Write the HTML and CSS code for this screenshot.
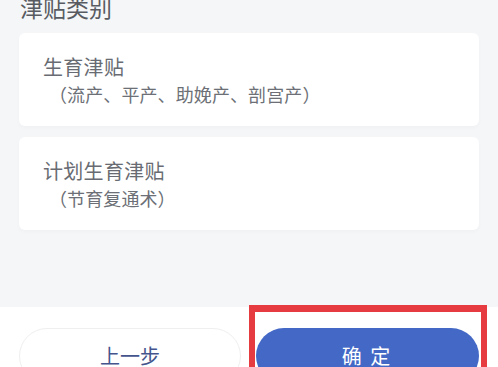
FILE: index.html
```html
<!DOCTYPE html>
<html lang="zh-CN">
<head>
<meta charset="utf-8">
<title>津贴类别</title>
<link rel="stylesheet" href="styles.css">
</head>
<body>
<div class="page">
  <main class="content">
    <h2 class="title">津贴类别</h2>
    <div class="card">
      <div class="card-name">生育津贴</div>
      <div class="card-desc">（流产、平产、助娩产、剖宫产）</div>
    </div>
    <div class="card">
      <div class="card-name">计划生育津贴</div>
      <div class="card-desc">（节育复通术）</div>
    </div>
  </main>
  <footer class="footer">
    <button class="btn btn-prev">上一步</button>
    <button class="btn btn-ok">确 定</button>
    <div class="highlight"></div>
  </footer>
</div>
</body>
</html>
```

FILE: styles.css
```css
* { box-sizing: border-box; }
html, body {
  margin: 0;
  padding: 0;
  background: #f5f6f8;
  font-family: "Noto Sans CJK SC", "Noto Sans", sans-serif;
}
.page {
  height: 367px;
  overflow: hidden;
  display: flex;
  flex-direction: column;
}
.content {
  flex: 1;
  padding: 0 19px;
}
.title {
  margin: -8px 0 0 1px;
  font-size: 23px;
  line-height: 30px;
  font-weight: 400;
  color: #585c62;
}
.card {
  margin-top: 11px;
  background: #ffffff;
  border-radius: 6px;
  padding: 20px 24px 19px;
  box-shadow: 0 2px 4px rgba(0, 0, 0, 0.025);
}
.card + .card { margin-top: 11px; }
.card-name {
  font-size: 20px;
  line-height: 28px;
  color: #686c72;
  letter-spacing: 0.3px;
}
.card-desc {
  font-size: 18px;
  line-height: 26px;
  color: #6c7076;
  padding-left: 6px;
  letter-spacing: 0.1px;
}
.footer {
  position: relative;
  height: 60px;
  flex: none;
  background: #ffffff;
  display: flex;
  gap: 15px;
  padding: 21px 19px 0;
  align-items: flex-start;
}
.btn {
  flex: 1;
  height: 56px;
  border-radius: 28px;
  font-family: inherit;
  font-size: 20px;
  line-height: 20px;
  padding: 0;
  cursor: pointer;
}
.btn-prev {
  background: #ffffff;
  border: 1px solid #efefef;
  color: #44548c;
}
.btn-ok {
  background: #4368c6;
  border: none;
  color: #ffffff;
  word-spacing: 4px;
  padding-right: 3px;
}
.highlight {
  position: absolute;
  left: 249px;
  top: -2px;
  width: 238px;
  height: 120px;
  border: 6px solid #e63b40;
  border-top-width: 7px;
  pointer-events: none;
}
```
